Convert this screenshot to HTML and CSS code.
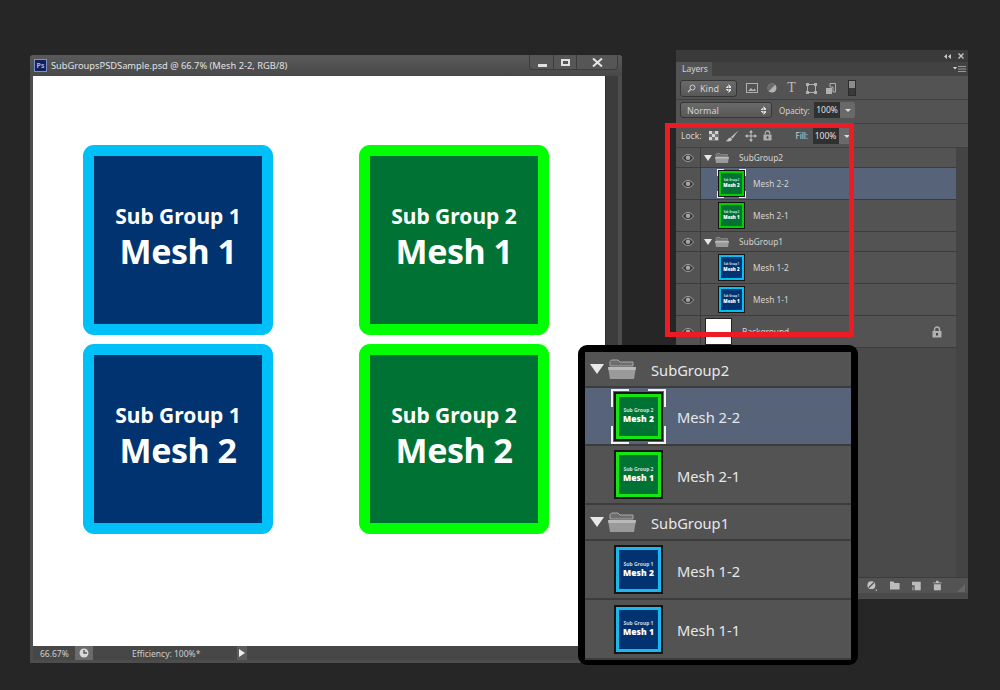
FILE: index.html
```html
<!DOCTYPE html>
<html lang="en">
<head>
    <meta charset="UTF-8">
    <title>SubGroups PSD Sample</title>
    <link rel="stylesheet" href="styles.css">
</head>
<body>
    <svg class="defs" width="0" height="0">
        <symbol id="eye" viewBox="0 0 12 8">
            <path d="M0.5 4C2.5 1.2 4.2 0.5 6 0.5S9.5 1.2 11.5 4C9.5 6.8 7.8 7.5 6 7.5S2.5 6.8 0.5 4Z" fill="#333" stroke="#a4a4a4"/>
            <circle cx="6" cy="3.8" r="2.3" fill="#a4a4a4"/>
        </symbol>
        <symbol id="folder" viewBox="0 0 28 20">
            <path d="M2 5V2.5L3.5 1H10L12 3H25V7H2Z" fill="#6e6e6e" stroke="#a8a8a8"/>
            <path d="M0 8H28L26 20H2Z" fill="#9a9a9a"/>
            <path d="M0 8H28L27.5 11H0.5Z" fill="#b9b9b9"/>
        </symbol>
        <symbol id="lock" viewBox="0 0 10 12">
            <path d="M2.5 5V3.5A2.5 2.5 0 0 1 7.5 3.5V5" fill="none" stroke="#b0b0b0" stroke-width="1.4"/>
            <path d="M0.5 5H9.5V11.5H0.5Z" fill="#b0b0b0"/>
            <rect x="4" y="7" width="2" height="2.5" fill="#444"/>
        </symbol>
    </svg>

    <!-- document window -->
    <div class="doc-window">
        <div class="doc-title">
            <span class="ps-badge">Ps</span>
            <span class="doc-name">SubGroupsPSDSample.psd @ 66.7% (Mesh 2-2, RGB/8)</span>
            <div class="win-btns">
                <span class="win-btn min"><i></i></span>
                <span class="win-btn max"><i></i></span>
                <span class="win-btn close">
                    <svg width="11" height="9" viewBox="0 0 11 9"><path d="M1 0.5L10 8.5M10 0.5L1 8.5" stroke="#e4e4e4" stroke-width="2"/></svg>
                </span>
            </div>
        </div>
        <div class="doc-body">
            <div class="canvas">
                <div class="card blue"><div class="card-inner"><span class="card-sub">Sub Group 1</span><span class="card-main">Mesh 1</span></div></div>
                <div class="card green"><div class="card-inner"><span class="card-sub">Sub Group 2</span><span class="card-main">Mesh 1</span></div></div>
                <div class="card blue"><div class="card-inner"><span class="card-sub">Sub Group 1</span><span class="card-main">Mesh 2</span></div></div>
                <div class="card green"><div class="card-inner"><span class="card-sub">Sub Group 2</span><span class="card-main">Mesh 2</span></div></div>
            </div>
            <div class="doc-scroll"></div>
        </div>
        <div class="status-bar">
            <span class="zoom-val">66.67%</span>
            <span class="status-icon">
                <svg width="10" height="10" viewBox="0 0 10 10"><circle cx="5" cy="5" r="4.5" fill="#d8d8d8"/><path d="M5 2V5H8" fill="none" stroke="#555" stroke-width="1.4"/></svg>
            </span>
            <span class="status-text">Efficiency: 100%*</span>
            <span class="status-arrow"></span>
        </div>
    </div>

    <!-- layers panel -->
    <div class="panel">
        <div class="panel-top">
            <svg width="7" height="5" viewBox="0 0 7 5"><path d="M3 0V5L0 2.5ZM7 0V5L4 2.5Z" fill="#c8c8c8"/></svg>
            <svg width="6" height="6" viewBox="0 0 6 6"><path d="M0.5 0.5L5.5 5.5M5.5 0.5L0.5 5.5" stroke="#c8c8c8" stroke-width="1.3"/></svg>
        </div>
        <div class="panel-tabs">
            <span class="tab">Layers</span>
            <svg class="tab-menu" width="13" height="7" viewBox="0 0 13 7"><path d="M0 1H4L2 3.5Z" fill="#ddd"/><path d="M5 0.5H13M5 3H13M5 5.5H13" stroke="#9a9a9a"/></svg>
        </div>

        <div class="filter-row">
            <div class="select kind">
                <svg width="9" height="9" viewBox="0 0 9 9"><circle cx="5.5" cy="3.5" r="2.5" fill="none" stroke="#ccc"/><path d="M3.5 5.5L1 8" stroke="#ccc" stroke-width="1.3"/></svg>
                <span>Kind</span>
                <i class="updown"></i>
            </div>
            <div class="filter-icons">
                <svg width="12" height="10" viewBox="0 0 12 10"><rect x="0.5" y="0.5" width="11" height="9" fill="none" stroke="#b0b0b0"/><path d="M2 8L5 5L7 7L9 5.5L10 8Z" fill="#b0b0b0"/></svg>
                <svg width="10" height="10" viewBox="0 0 10 10"><circle cx="5" cy="5" r="4.5" fill="#b4b4b4"/><path d="M5 0.5A4.5 4.5 0 0 0 1.8 8.2L8.2 1.8A4.5 4.5 0 0 0 5 0.5Z" fill="#6a6a6a"/></svg>
                <span class="filter-t">T</span>
                <svg width="11" height="11" viewBox="0 0 11 11"><rect x="1.5" y="1.5" width="8" height="8" fill="none" stroke="#b0b0b0"/><path d="M0 0H3V3H0ZM8 0H11V3H8ZM0 8H3V11H0ZM8 8H11V11H8Z" fill="#b0b0b0"/></svg>
                <svg width="10" height="11" viewBox="0 0 10 11"><path d="M4 0.5H9.500V9H7V4H4Z" fill="none" stroke="#b0b0b0"/><path d="M0 5H6V11H0Z" fill="#b0b0b0"/></svg>
                <span class="filter-toggle"><i></i></span>
            </div>
        </div>

        <div class="blend-row">
            <div class="select normal"><span>Normal</span><i class="updown"></i></div>
            <span class="field-label opacity-label">Opacity:</span>
            <span class="num-field">100%</span><span class="num-arrow"></span>
        </div>

        <div class="lock-row">
            <span class="field-label">Lock:</span>
            <div class="lock-icons">
                <svg width="10" height="10" viewBox="0 0 10 10"><rect width="10" height="10" fill="#777"/><path d="M0 0H3V3H0ZM6 0H9V3H6ZM3 3H6V6H3ZM0 6H3V9H0ZM6 6H9V9H6Z" fill="#d4d4d4"/></svg>
                <svg width="14" height="12" viewBox="0 0 14 12"><path d="M13.5 0.5L6 7L7.5 8.5Z" fill="#c4c4c4"/><path d="M5.5 7.5C3 7.5 3 10.5 0.5 11C3 12 7 11.5 7 9Z" fill="#c4c4c4"/></svg>
                <svg width="12" height="12" viewBox="0 0 12 12"><path d="M6 0L8 2.5H4ZM6 12L4 9.5H8ZM0 6L2.5 4V8ZM12 6L9.5 8V4Z" fill="#c4c4c4"/><path d="M6 2V10M2 6H10" stroke="#c4c4c4"/></svg>
                <svg width="9" height="11" viewBox="0 0 10 12"><use href="#lock"/></svg>
            </div>
            <span class="field-label fill-label">Fill:</span>
            <span class="num-field">100%</span><span class="num-arrow"></span>
        </div>

        <div class="panel-list">
            <div class="layers">
                <div class="row group">
                    <span class="eye"><svg><use href="#eye"/></svg></span>
                    <div class="row-body"><i class="twist"></i><svg class="folder"><use href="#folder"/></svg><span class="row-name">SubGroup2</span></div>
                </div>
                <div class="row layer selected">
                    <span class="eye"><svg><use href="#eye"/></svg></span>
                    <div class="row-body">
                        <div class="thumb green picked"><span>Sub Group 2</span><b>Mesh 2</b></div>
                        <span class="row-name">Mesh 2-2</span>
                    </div>
                </div>
                <div class="row layer">
                    <span class="eye"><svg><use href="#eye"/></svg></span>
                    <div class="row-body">
                        <div class="thumb green"><span>Sub Group 2</span><b>Mesh 1</b></div>
                        <span class="row-name">Mesh 2-1</span>
                    </div>
                </div>
                <div class="row group">
                    <span class="eye"><svg><use href="#eye"/></svg></span>
                    <div class="row-body"><i class="twist"></i><svg class="folder"><use href="#folder"/></svg><span class="row-name">SubGroup1</span></div>
                </div>
                <div class="row layer">
                    <span class="eye"><svg><use href="#eye"/></svg></span>
                    <div class="row-body">
                        <div class="thumb blue"><span>Sub Group 1</span><b>Mesh 2</b></div>
                        <span class="row-name">Mesh 1-2</span>
                    </div>
                </div>
                <div class="row layer">
                    <span class="eye"><svg><use href="#eye"/></svg></span>
                    <div class="row-body">
                        <div class="thumb blue"><span>Sub Group 1</span><b>Mesh 1</b></div>
                        <span class="row-name">Mesh 1-1</span>
                    </div>
                </div>
                <div class="row layer background">
                    <span class="eye"><svg><use href="#eye"/></svg></span>
                    <div class="row-body">
                        <div class="thumb white"></div>
                        <span class="row-name">Background</span>
                        <svg class="bg-lock" width="10" height="12"><use href="#lock"/></svg>
                    </div>
                </div>
            </div>
            <div class="panel-scroll"></div>
        </div>

        <div class="panel-foot">
            <svg width="12" height="12" viewBox="0 0 12 12"><circle cx="5" cy="5" r="4.5" fill="#c4c4c4"/><path d="M2 8L8 2" stroke="#555" stroke-width="1.5"/><rect x="10" y="10" width="2" height="1.5" fill="#ccc"/></svg>
            <svg width="11" height="9" viewBox="0 0 11 9"><path d="M0 0H4L5 1.5H11V9H0Z" fill="#bcbcbc"/></svg>
            <svg width="10" height="10" viewBox="0 0 10 10"><path d="M0 0H10V10H3V4H0Z" fill="#bcbcbc"/><rect x="0" y="6" width="2" height="4" fill="#8a8a8a"/></svg>
            <svg width="10" height="11" viewBox="0 0 10 11"><path d="M0 2H10V3H0ZM3.5 0H6.5V2H3.5ZM1 4H9V11H1Z" fill="#bcbcbc"/></svg>
            <svg class="grip" width="8" height="8" viewBox="0 0 8 8"><path d="M8 0V8H0Z" fill="#666"/></svg>
        </div>
    </div>

    <!-- red highlight -->
    <div class="highlight"></div>

    <!-- enlarged callout -->
    <div class="callout">
        <div class="layers big">
            <div class="row group">
                <div class="row-body"><i class="twist"></i><svg class="folder"><use href="#folder"/></svg><span class="row-name">SubGroup2</span></div>
            </div>
            <div class="row layer selected">
                <div class="row-body">
                    <div class="thumb green picked"><span>Sub Group 2</span><b>Mesh 2</b></div>
                    <span class="row-name">Mesh 2-2</span>
                </div>
            </div>
            <div class="row layer">
                <div class="row-body">
                    <div class="thumb green"><span>Sub Group 2</span><b>Mesh 1</b></div>
                    <span class="row-name">Mesh 2-1</span>
                </div>
            </div>
            <div class="row group">
                <div class="row-body"><i class="twist"></i><svg class="folder"><use href="#folder"/></svg><span class="row-name">SubGroup1</span></div>
            </div>
            <div class="row layer">
                <div class="row-body">
                    <div class="thumb blue"><span>Sub Group 1</span><b>Mesh 2</b></div>
                    <span class="row-name">Mesh 1-2</span>
                </div>
            </div>
            <div class="row layer">
                <div class="row-body">
                    <div class="thumb blue"><span>Sub Group 1</span><b>Mesh 1</b></div>
                    <span class="row-name">Mesh 1-1</span>
                </div>
            </div>
        </div>
    </div>
</body>
</html>
```

FILE: styles.css
```css
* {
    box-sizing: border-box;
}
html, body {
    margin: 0;
    height: 100%;
}
body {
    position: relative;
    width: 1000px;
    height: 690px;
    overflow: hidden;
    background: #262626;
    font-family: "Noto Sans", "Liberation Sans", sans-serif;
    font-size: 9px;
    color: #d4d4d4;
}
.defs {
    position: absolute;
}

/* document window */
.doc-window {
    position: absolute;
    left: 30px;
    top: 55px;
    width: 592px;
    height: 608px;
    display: flex;
    flex-direction: column;
    padding: 0 4px 3px 3px;
    background: #4d4d4d;
    border-radius: 4px 4px 0 0;
    box-shadow: inset 0 1px 0 #6a6a6a;
}
.doc-title {
    position: relative;
    height: 21px;
    display: flex;
    align-items: center;
    gap: 4px;
    margin: 0 -4px 0 -3px;
    padding: 0 4px;
    background: linear-gradient(#5a5a5a, #484848);
    border-radius: 4px 4px 0 0;
}
.ps-badge {
    width: 13px;
    height: 13px;
    background: #10205c;
    border: 1px solid #7d8fc8;
    color: #9db4f0;
    font-size: 7px;
    font-weight: 700;
    line-height: 11px;
    text-align: center;
}
.doc-name {
    font-size: 9.3px;
    color: #e2e2e2;
    white-space: nowrap;
}
.win-btns {
    position: absolute;
    right: 4px;
    top: 0;
    height: 15px;
    display: flex;
    background: #565656;
    border: 1px solid #3c3c3c;
    border-top: none;
    border-radius: 0 0 4px 4px;
}
.win-btn {
    height: 100%;
    display: flex;
    align-items: center;
    justify-content: center;
    border-left: 1px solid #3c3c3c;
}
.win-btn:first-child {
    border-left: none;
}
.win-btn.min {
    width: 23px;
}
.win-btn.min i {
    display: block;
    width: 9px;
    height: 3px;
    margin-top: 7px;
    margin-left: 2px;
    background: #e0e0e0;
}
.win-btn.max {
    width: 23px;
}
.win-btn.max i {
    display: block;
    width: 9px;
    height: 7px;
    border: 2px solid #e0e0e0;
}
.win-btn.close {
    width: 41px;
}
.doc-body {
    flex: 1;
    display: flex;
    min-height: 0;
}
.canvas {
    width: 572px;
    background: #fff;
    display: grid;
    grid-template-columns: 190px 190px;
    grid-auto-rows: 190px;
    column-gap: 86px;
    row-gap: 9px;
    align-content: start;
    padding: 69px 0 0 50px;
}
.doc-scroll {
    flex: 1;
    background: #3c3c3c;
    border-left: 1px solid #2e2e2e;
}
.card {
    padding: 11px;
    border-radius: 11px;
}
.card.blue {
    background: #00c0f8;
}
.card.green {
    background: #00ff00;
}
.card-inner {
    height: 100%;
    display: flex;
    flex-direction: column;
    align-items: center;
    justify-content: center;
    padding-bottom: 4px;
    color: #fff;
    font-weight: 700;
}
.blue .card-inner {
    background: #00336f;
}
.green .card-inner {
    background: #007233;
}
.card-sub {
    font-size: 21px;
    line-height: 26px;
}
.card-main {
    font-size: 34px;
    line-height: 44px;
    letter-spacing: -0.5px;
}
.status-bar {
    height: 14px;
    display: flex;
    align-items: center;
    background: #474747;
    font-size: 8.5px;
    color: #cfcfcf;
}
.zoom-val {
    width: 42px;
    padding-left: 7px;
    white-space: nowrap;
}
.status-icon {
    width: 18px;
    height: 14px;
    display: flex;
    align-items: center;
    justify-content: center;
    background: #6a6a6a;
}
.status-text {
    width: 144px;
    padding-left: 39px;
    white-space: nowrap;
}
.status-arrow {
    width: 10px;
    height: 14px;
    background: #5c5c5c;
    position: relative;
}
.status-arrow::after {
    content: "";
    position: absolute;
    left: 2px;
    top: 3px;
    border-left: 6px solid #eee;
    border-top: 4px solid transparent;
    border-bottom: 4px solid transparent;
}

/* layers panel */
.panel {
    position: absolute;
    left: 676px;
    top: 50px;
    width: 292px;
    height: 549px;
    display: flex;
    flex-direction: column;
    background: #535353;
    border-radius: 3px 3px 0 0;
}
.panel-top {
    height: 12px;
    flex: none;
    display: flex;
    align-items: center;
    justify-content: flex-end;
    gap: 7px;
    padding-right: 4px;
    background: #3a3a3a;
}
.panel-tabs {
    height: 14px;
    flex: none;
    display: flex;
    justify-content: space-between;
    align-items: center;
    background: #424242;
}
.tab {
    width: 36px;
    height: 100%;
    padding-left: 6px;
    line-height: 14px;
    font-size: 8.5px;
    background: #535353;
}
.tab-menu {
    margin-right: 2px;
}
.filter-row {
    height: 22px;
    flex: none;
    display: flex;
    align-items: center;
    padding: 0 4px;
    margin-top: 1px;
}
.select {
    position: relative;
    display: flex;
    align-items: center;
    gap: 4px;
    padding: 0 6px;
    background: linear-gradient(#6a6a6a, #585858);
    border: 1px solid #363636;
    border-radius: 3px;
    color: #d4d4d4;
}
.select.kind {
    width: 57px;
    height: 17px;
}
.select.normal {
    width: 92px;
    height: 16px;
}
.updown {
    position: absolute;
    right: 5px;
    top: 3px;
    width: 5px;
    height: 9px;
    background:
        linear-gradient(to top left, #ddd 50%, transparent 50%) left top / 50% 4px no-repeat,
        linear-gradient(to top right, #ddd 50%, transparent 50%) right top / 50% 4px no-repeat,
        linear-gradient(to bottom left, #ddd 50%, transparent 50%) left bottom / 50% 4px no-repeat,
        linear-gradient(to bottom right, #ddd 50%, transparent 50%) right bottom / 50% 4px no-repeat;
}
.filter-icons {
    display: flex;
    align-items: center;
    gap: 9px;
    margin-left: 9px;
}
.filter-t {
    width: 11px;
    font-family: "Liberation Serif", serif;
    font-size: 14px;
    line-height: 14px;
    text-align: center;
    color: #b8b8b8;
}
.filter-toggle {
    display: block;
    width: 8px;
    height: 16px;
    margin-left: 3px;
    background: #3a3a3a;
    border: 1px solid #2c2c2c;
}
.filter-toggle i {
    display: block;
    height: 7px;
    background: #8c8c8c;
}
.blend-row,
.lock-row {
    flex: none;
    display: flex;
    align-items: center;
    padding-left: 4px;
    border-bottom: 1px solid #3f3f3f;
}
.blend-row {
    height: 25px;
    padding-bottom: 3px;
    border-top: 1px solid #3f3f3f;
}
.lock-row {
    height: 24px;
    padding-left: 5px;
}
.field-label {
    font-size: 8.5px;
    color: #d4d4d4;
    white-space: nowrap;
}
.opacity-label {
    width: 29px;
    margin-left: 7px;
    margin-right: 6px;
    font-size: 8px;
}
.num-field {
    width: 26px;
    height: 16px;
    line-height: 16px;
    text-align: center;
    font-size: 8.5px;
    color: #e0e0e0;
    background: #303030;
}
.num-arrow {
    position: relative;
    width: 15px;
    height: 16px;
    background: #696969;
    border-radius: 0 2px 2px 0;
}
.num-arrow::after {
    content: "";
    position: absolute;
    left: 5px;
    top: 7px;
    border-top: 3px solid #ddd;
    border-left: 3px solid transparent;
    border-right: 3px solid transparent;
}
.lock-icons {
    display: flex;
    align-items: center;
    gap: 6px;
    margin-left: 7px;
}
.fill-label {
    width: 11px;
    margin-left: 24px;
    margin-right: 6px;
    font-size: 8px;
}
.panel-list {
    flex: 1;
    min-height: 0;
    display: flex;
}
.layers {
    flex: 1;
    min-width: 0;
    display: flex;
    flex-direction: column;
    background: #4a4a4a;
}
.panel-scroll {
    width: 12px;
    background: #444;
}
.row {
    display: flex;
    flex: none;
    background: #535353;
    border-bottom: 1px solid #3c3c3c;
}
.row.group {
    height: 20px;
}
.row.layer {
    height: 32px;
}
.row.selected {
    background: #566379;
}
.eye {
    width: 25px;
    flex: none;
    display: flex;
    align-items: center;
    justify-content: center;
    background: #535353;
    border-right: 1px solid #3c3c3c;
}
.eye svg {
    width: 12px;
    height: 8px;
}
.row-body {
    position: relative;
    flex: 1;
    min-width: 0;
    display: flex;
    align-items: center;
}
.row-name {
    font-size: 8.3px;
    color: #d4d4d4;
    white-space: nowrap;
}
.twist {
    margin-left: 3px;
    border-top: 6px solid #e8e8e8;
    border-left: 4px solid transparent;
    border-right: 4px solid transparent;
}
.folder {
    width: 14px;
    height: 10px;
    margin-left: 3px;
}
.group .row-name {
    margin-left: 10px;
}
.thumb {
    position: relative;
    width: 27px;
    height: 27px;
    margin-left: 17px;
    margin-right: 8px;
    flex: none;
    display: flex;
    flex-direction: column;
    align-items: center;
    justify-content: center;
    gap: 1px;
    border: 3px solid #00ff00;
    outline: 1px solid #151515;
    outline-offset: -1px;
    color: #fff;
    font-weight: 700;
    line-height: 1;
    white-space: nowrap;
}
.thumb span {
    font-size: 2.6px;
    opacity: 0.8;
}
.thumb b {
    font-size: 4.5px;
}
.thumb.green {
    background: #007233;
    border-color: #00d000;
}
.thumb.blue {
    background: #00336f;
    border-color: #00c0f8;
}
.thumb.white {
    margin-left: 4px;
    margin-right: 10px;
    background: #fff;
    border: 1px solid #222;
    outline: none;
}
/* selection corners on the active layer thumbnail */
.thumb.picked::before {
    content: "";
    position: absolute;
    left: -4px;
    top: -4px;
    right: -4px;
    bottom: -4px;
    --c: #eee;
    background:
        linear-gradient(var(--c), var(--c)) left top / 7px 1px no-repeat,
        linear-gradient(var(--c), var(--c)) left top / 1px 7px no-repeat,
        linear-gradient(var(--c), var(--c)) right top / 7px 1px no-repeat,
        linear-gradient(var(--c), var(--c)) right top / 1px 7px no-repeat,
        linear-gradient(var(--c), var(--c)) left bottom / 7px 1px no-repeat,
        linear-gradient(var(--c), var(--c)) left bottom / 1px 7px no-repeat,
        linear-gradient(var(--c), var(--c)) right bottom / 7px 1px no-repeat,
        linear-gradient(var(--c), var(--c)) right bottom / 1px 7px no-repeat;
}
.bg-lock {
    position: absolute;
    right: 14px;
    top: 10px;
}
.panel-foot {
    position: relative;
    flex: none;
    height: 22px;
    display: flex;
    align-items: center;
    gap: 12.5px;
    padding: 0 26px 6px 191px;
    background: #535353;
    border-top: 1px solid #3c3c3c;
    box-shadow: inset 0 -6px 0 #4a4a4a;
}
.grip {
    position: absolute;
    right: 3px;
    top: 6px;
}

/* red highlight box */
.highlight {
    position: absolute;
    left: 665px;
    top: 123px;
    width: 189px;
    height: 214px;
    border: 5px solid #ed1c24;
}

/* callout */
.callout {
    position: absolute;
    left: 578px;
    top: 345px;
    width: 280px;
    height: 320px;
    padding: 7px;
    background: #000;
    border-radius: 9px;
}
.big {
    height: 100%;
    background: #535353;
}
.big .row {
    border-bottom: 2px solid #3c3c3c;
}
.big .row.group {
    height: 36px;
}
.big .row.layer {
    height: 59px;
}
.big .row.selected {
    height: 58px;
}
.big .row:last-child {
    height: 60px;
}
.big .row-name {
    margin-top: 2px;
    font-size: 14.7px;
    color: #e6e8ea;
}
.big .twist {
    margin-left: 5px;
    border-top-width: 10px;
    border-left-width: 7px;
    border-right-width: 7px;
}
.big .folder {
    width: 28px;
    height: 20px;
    margin-left: 4px;
}
.big .group .row-name {
    margin-left: 15px;
}
.big .thumb {
    width: 49px;
    height: 49px;
    margin-left: 29px;
    margin-right: 14px;
    gap: 2px;
    border-width: 5px;
    outline-width: 2px;
    outline-offset: -2px;
}
.big .thumb.green {
    border-color: #14e614;
}
.big .thumb.blue {
    border-color: #1ab8ee;
}
.big .thumb span {
    font-size: 5px;
}
.big .thumb b {
    font-size: 8.5px;
}
.big .thumb.picked::before {
    --c: #f2f2f2;
    left: -8px;
    top: -8px;
    right: -8px;
    bottom: -8px;
    background-size:
        18px 2px, 2px 18px, 18px 2px, 2px 18px,
        18px 2px, 2px 18px, 18px 2px, 2px 18px;
}
```
